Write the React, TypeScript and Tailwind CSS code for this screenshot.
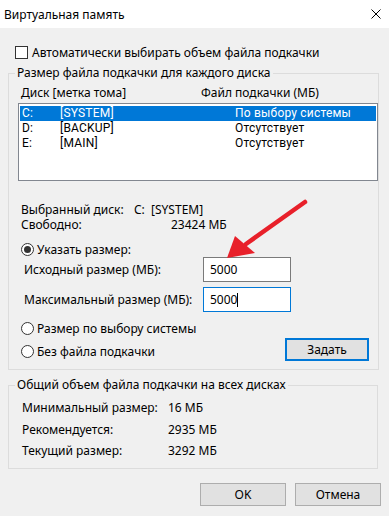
import React from "react";

const Radio = ({ checked }: { checked?: boolean }) => (
  <span className="w-[13px] h-[13px] rounded-full border border-[#333333] bg-white flex items-center justify-center shrink-0">
    {checked && <span className="w-[7px] h-[7px] rounded-full bg-[#333333]" />}
  </span>
);

const drives = [
  { d: "C:", label: "[SYSTEM]", size: "По выбору системы", selected: true },
  { d: "D:", label: "[BACKUP]", size: "Отсутствует" },
  { d: "E:", label: "[MAIN]", size: "Отсутствует" },
];

const totals = [
  ["Минимальный размер:", "16 МБ"],
  ["Рекомендуется:", "2935 МБ"],
  ["Текущий размер:", "3292 МБ"],
];

export default function App() {
  return (
    <div className="relative w-[389px] h-[516px] overflow-hidden bg-[#f0f0f0] text-[12px] leading-[15px] text-black font-['Noto_Sans',sans-serif]">
      {/* title bar */}
      <div className="h-[28px] bg-white flex items-center pl-[4px]">
        <span>Виртуальная память</span>
        <svg className="ml-auto mr-[8px]" width="10" height="10" viewBox="0 0 10 10">
          <path d="M0.5 0.5 L9.5 9.5 M9.5 0.5 L0.5 9.5" stroke="#000" strokeWidth="1" />
        </svg>
      </div>

      <div className="mt-[16px] h-[17px] pl-[15px] flex items-center gap-[4px]">
        <span className="w-[13px] h-[13px] border border-[#333333] bg-white" />
        <span>Автоматически выбирать объем файла подкачки</span>
      </div>

      <fieldset className="ml-[8px] mt-[4px] w-[370px] border border-[#dcdcdc]">
        <legend className="ml-[6px] px-[2px] leading-[16px]">Размер файла подкачки для каждого диска</legend>

        <div className="h-[22px] pl-[12px] flex items-center">
          <span className="w-[180px]">Диск [метка тома]</span>
          <span>Файл подкачки (МБ)</span>
        </div>

        <div className="ml-[9px] w-[360px] h-[78px] border border-[#828790] bg-white pt-[2px] font-['Roboto',sans-serif] tracking-[0.2px]">
          {drives.map((r) => (
            <div
              key={r.d}
              className={
                r.selected
                  ? "mx-[1px] h-[15px] pl-[2px] flex items-center bg-[#0078d7] text-white"
                  : "mx-[1px] h-[15px] pl-[2px] flex items-center"
              }
            >
              <span className="w-[38px]">{r.d}</span>
              <span className="w-[175px]">{r.label}</span>
              <span>{r.size}</span>
            </div>
          ))}
        </div>

        <div className="mt-[20px] h-[16px] pl-[12px] flex items-center">
          <span className="w-[113px]">Выбранный диск:</span>
          <span>C:&nbsp;&nbsp;[SYSTEM]</span>
        </div>
        <div className="h-[15px] pl-[12px] flex items-center">
          <span className="w-[150px]">Свободно:</span>
          <span>23424 МБ</span>
        </div>

        <div className="mt-[10px] h-[15px] pl-[12px] flex items-center gap-[3px]">
          <Radio checked />
          <span>Указать размер:</span>
        </div>
        <div className="h-[25px] pl-[15px] flex items-center">
          <span className="w-[179px]">Исходный размер (МБ):</span>
          <div className="w-[88px] h-[25px] border border-[#7a7a7a] bg-white pl-[6px] flex items-center">5000</div>
        </div>
        <div className="mt-[5px] h-[25px] pl-[15px] flex items-center">
          <span className="w-[179px]">Максимальный размер (МБ):</span>
          <div className="w-[88px] h-[25px] border border-[#0078d7] bg-white pl-[6px] flex items-center">
            5000
            <span className="w-[1px] h-[14px] bg-black" />
          </div>
        </div>

        <div className="mt-[9px] h-[15px] pl-[12px] flex items-center gap-[3px]">
          <Radio />
          <span>Размер по выбору системы</span>
        </div>
        <div className="mt-[2px] mb-[8px] h-[23px] pl-[12px] pr-[9px] flex items-center">
          <div className="mt-[3px] flex items-center gap-[3px]">
            <Radio />
            <span>Без файла подкачки</span>
          </div>
          <button className="ml-auto w-[84px] h-[23px] border-2 border-[#0078d7] bg-[#e1e1e1] flex items-center justify-center">
            Задать
          </button>
        </div>
      </fieldset>

      <fieldset className="ml-[8px] mt-[7px] w-[370px] border border-[#dcdcdc] pb-[10px]">
        <legend className="ml-[6px] px-[2px] leading-[16px]">Общий объем файла подкачки на всех дисках</legend>
        {totals.map(([k, v], i) => (
          <div
            key={k}
            className={(i === 2 ? "mt-[5px]" : "mt-[6px]") + " h-[16px] pl-[13px] flex items-center"}
          >
            <span className="w-[146px]">{k}</span>
            <span>{v}</span>
          </div>
        ))}
      </fieldset>

      <div className="mt-[14px] pr-[8px] flex justify-end gap-[9px]">
        <button className="w-[86px] h-[23px] border border-[#adadad] bg-[#e1e1e1] flex items-center justify-center">OK</button>
        <button className="w-[86px] h-[23px] border border-[#adadad] bg-[#e1e1e1] flex items-center justify-center">Отмена</button>
      </div>

      {/* red annotation arrow */}
      <svg className="absolute left-0 top-0 pointer-events-none" width="389" height="516">
        <line x1="305" y1="202" x2="246" y2="244" stroke="#e8202a" strokeWidth="4.5" strokeLinecap="round" />
        <polygon points="227,258 235,236 255,253" fill="#e8202a" />
      </svg>
    </div>
  );
}
